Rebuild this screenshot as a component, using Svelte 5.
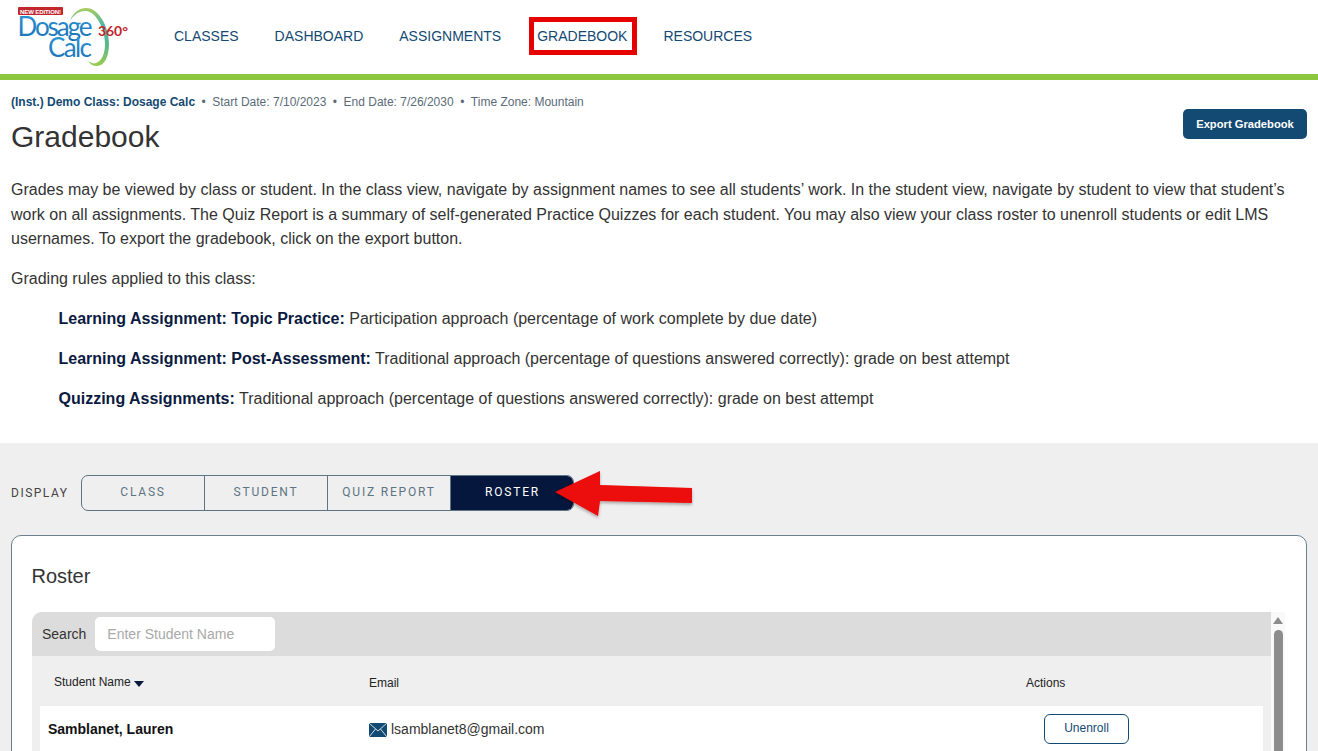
<script>
  const navItems = ["CLASSES", "DASHBOARD", "ASSIGNMENTS", "GRADEBOOK", "RESOURCES"];
  const tabs = ["CLASS", "STUDENT", "QUIZ REPORT", "ROSTER"];
  const activeTab = "ROSTER";
  const rules = [
    { label: "Learning Assignment: Topic Practice:", text: "Participation approach (percentage of work complete by due date)" },
    { label: "Learning Assignment: Post-Assessment:", text: "Traditional approach (percentage of questions answered correctly): grade on best attempt" },
    { label: "Quizzing Assignments:", text: "Traditional approach (percentage of questions answered correctly): grade on best attempt" },
  ];
</script>

<div class="page">
  <header class="topbar">
    <svg class="logo" width="120" height="68" viewBox="0 0 120 68">
      <defs>
        <linearGradient id="arc" x1="0" y1="0" x2="0" y2="1">
          <stop offset="0" stop-color="#a9cf5a" />
          <stop offset="0.3" stop-color="#4fb3a8" />
          <stop offset="0.65" stop-color="#59b98a" />
          <stop offset="1" stop-color="#9acb4c" />
        </linearGradient>
        <linearGradient id="word" x1="0" y1="0" x2="0" y2="1">
          <stop offset="0" stop-color="#2f9ad6" />
          <stop offset="1" stop-color="#1a6fb5" />
        </linearGradient>
      </defs>
      <path d="M58 21 C 61 12, 68 8, 74 8 C 87 8, 97 27, 97 44 C 97 57, 92 66, 85 66 C 81 66, 78 64, 76 61 C 79 63, 82 64, 84 63 C 90 61, 93 53, 93 44 C 93 28, 84 12, 74 11 C 68 10.500, 62 14, 58 21 Z" fill="url(#arc)" />
      <rect x="6" y="7" width="45" height="8" rx="1" fill="#c1272d" />
      <text x="8" y="13.500" class="badge" textLength="41">NEW EDITION!</text>
      <text x="5.500" y="36" class="word" fill="url(#word)" textLength="75">Dosage</text>
      <text x="36" y="57" class="word" fill="url(#word)" textLength="44">Calc</text>
      <text x="86" y="36" class="deg" textLength="30">360°</text>
    </svg>
    <nav class="nav">
      {#each navItems as item}
        <a class="nav-link" href="#top">
          {item}
          {#if item === "GRADEBOOK"}<span class="callout"></span>{/if}
        </a>
      {/each}
    </nav>
  </header>

  <section class="intro">
    <div class="title-row">
      <div>
        <div class="meta">
          <strong>(Inst.) Demo Class: Dosage Calc</strong>
          <span class="dot">•</span>
          <span>Start Date: 7/10/2023</span>
          <span class="dot">•</span>
          <span>End Date: 7/26/2030</span>
          <span class="dot">•</span>
          <span>Time Zone: Mountain</span>
        </div>
        <h1>Gradebook</h1>
      </div>
      <button class="export">Export Gradebook</button>
    </div>
    <p class="lead">
      Grades may be viewed by class or student. In the class view, navigate by assignment names to see all students’ work. In the student view, navigate by student to view that student’s work on all assignments. The Quiz Report is a summary of self-generated Practice Quizzes for each student. You may also view your class roster to unenroll students or edit LMS usernames. To export the gradebook, click on the export button.
    </p>
    <p class="lead rules-title">Grading rules applied to this class:</p>
    <ul class="rules">
      {#each rules as rule}
        <li><strong>{rule.label}</strong> {rule.text}</li>
      {/each}
    </ul>
  </section>

  <section class="lower">
    <div class="display">
      <span class="display-label">DISPLAY</span>
      <div class="tabs">
        {#each tabs as tab}
          <button class="tab" class:active={tab === activeTab}>{tab}</button>
        {/each}
      </div>
      <svg class="arrow" width="150" height="58" viewBox="0 0 150 58">
        <defs>
          <filter id="arrow-shadow" x="-10%" y="-10%" width="120%" height="130%">
            <feDropShadow dx="0" dy="2" stdDeviation="1.500" flood-color="#000" flood-opacity="0.3" />
          </filter>
        </defs>
        <path d="M5 24 L50 3 L50 17 L142 20 L142 35 L50 33 L48 48 Z" fill="#ec0808" filter="url(#arrow-shadow)" />
      </svg>
    </div>

    <div class="card">
      <h2>Roster</h2>
      <div class="scroller">
        <div class="table">
          <div class="search">
            <label for="student-search">Search</label>
            <input id="student-search" placeholder="Enter Student Name" />
          </div>
          <div class="row head">
            <div class="col-name">Student Name <span class="caret"></span></div>
            <div class="col-email">Email</div>
            <div class="col-actions">Actions</div>
          </div>
          <div class="row student">
            <div class="col-name"><strong>Samblanet, Lauren</strong></div>
            <div class="col-email">
              <svg class="mail" width="18" height="14" viewBox="0 0 18 14">
                <rect width="18" height="14" fill="#134a73" />
                <path d="M0 0 L9 8 L18 0 M0 14 L6.500 6 M18 14 L11.500 6" fill="none" stroke="#fff" stroke-width="0.800" />
              </svg>
              lsamblanet8@gmail.com
            </div>
            <div class="col-actions"><button class="unenroll">Unenroll</button></div>
          </div>
        </div>
        <div class="scrollbar">
          <span class="up"></span>
          <span class="thumb"></span>
        </div>
      </div>
    </div>
  </section>
</div>

<style>
  :global(body) {
    margin: 0;
    overflow: hidden;
  }

  .page {
    height: 751px;
    overflow: hidden;
    font-family: "Liberation Sans", Arial, sans-serif;
    color: #333;
    background: #fff;
    display: flex;
    flex-direction: column;
  }

  .topbar {
    height: 74px;
    flex: none;
    display: flex;
    align-items: center;
    border-bottom: 6px solid #8cc63f;
    padding-left: 12px;
  }

  .logo {
    flex: none;
    align-self: flex-start;
  }

  .badge {
    font: bold 6px "Liberation Sans", sans-serif;
    fill: #fff;
  }

  .word {
    font: 26px Lato, sans-serif;
  }

  .deg {
    font: bold 14px Lato, sans-serif;
    fill: #c1272d;
  }

  .nav {
    display: flex;
    gap: 36px;
    margin-left: 42px;
    margin-bottom: 3px;
  }

  .nav-link {
    position: relative;
    font-size: 14px;
    color: #134a73;
    text-decoration: none;
  }

  .callout {
    position: absolute;
    left: -8px;
    right: -10px;
    top: -11px;
    bottom: -11px;
    border: 5px solid #e60000;
  }

  .intro {
    padding: 14px 11px 0;
    height: 363px;
    box-sizing: border-box;
    flex: none;
  }

  .title-row {
    display: flex;
    justify-content: space-between;
    align-items: flex-start;
  }

  .meta {
    font-size: 12px;
    line-height: 16px;
    color: #5a6b78;
    display: flex;
    gap: 6px;
  }

  .meta strong {
    color: #134a73;
  }

  .dot {
    margin: 0 0.500px;
  }

  h1 {
    margin: 9px 0 0;
    font-size: 30px;
    font-weight: 400;
    line-height: 36px;
    color: #333;
  }

  .export {
    margin-top: 15px;
    width: 124px;
    height: 30px;
    border: none;
    border-radius: 5px;
    background: #134a73;
    color: #fff;
    font: bold 11.200px "Liberation Sans", sans-serif;
  }

  .lead {
    margin: 23px 0 0;
    font-size: 16px;
    line-height: 24.500px;
    color: #333;
  }

  .rules-title {
    margin-top: 15px;
  }

  .rules {
    list-style: none;
    margin: 15px 0 0;
    padding: 0 0 0 47.500px;
    font-size: 16px;
    line-height: 25px;
    display: flex;
    flex-direction: column;
    gap: 15px;
  }

  .rules strong {
    color: #0a1a3f;
  }

  .lower {
    flex: 1;
    background: #efefef;
    padding: 32px 11px 0;
    min-height: 0;
  }

  .display {
    position: relative;
    display: flex;
    align-items: center;
    height: 36px;
  }

  .display-label {
    width: 70px;
    padding-bottom: 1px;
    font: 12px Roboto, sans-serif;
    letter-spacing: 1.500px;
    color: #444;
  }

  .tabs {
    display: flex;
    width: 493px;
    height: 36px;
    box-sizing: border-box;
    border: 1px solid #5d7482;
    border-radius: 7px;
    overflow: hidden;
  }

  .tab {
    flex: none;
    width: 123px;
    padding: 0 0 2px;
    border: none;
    border-right: 1px solid #5d7482;
    background: transparent;
    color: #5d7482;
    font: 12px Roboto, sans-serif;
    letter-spacing: 1.800px;
  }

  .tab:last-child {
    border-right: none;
  }

  .tab.active {
    flex: 1;
    margin: -1px -1px -1px 0;
    background: #05173d;
    color: #fff;
  }

  .arrow {
    position: absolute;
    left: 539px;
    top: -7px;
  }

  .card {
    margin-top: 24px;
    background: #fff;
    border: 1px solid #6b7f8c;
    border-radius: 10px;
    height: 400px;
    box-sizing: border-box;
    padding: 0 20px;
  }

  h2 {
    margin: 28px 0 24px -0.500px;
    font-size: 20px;
    font-weight: 400;
    line-height: 24px;
    color: #333;
  }

  .scroller {
    display: flex;
    margin-right: 1px;
  }

  .table {
    width: 1239px;
    flex: none;
    background: #efefef;
    border-radius: 10px 0 0 0;
    overflow: hidden;
    padding-bottom: 100px;
  }

  .search {
    height: 44px;
    background: #dcdcdc;
    display: flex;
    align-items: center;
    gap: 9px;
    padding-left: 10px;
    font-size: 14px;
    color: #333;
  }

  .search input {
    width: 180px;
    height: 34px;
    box-sizing: border-box;
    border: none;
    border-radius: 5px;
    padding: 0 12px;
    font: 14px "Liberation Sans", sans-serif;
    background: #fff;
  }

  .search input::placeholder {
    color: #a9a9a9;
  }

  .row {
    display: flex;
    align-items: center;
  }

  .head {
    height: 50px;
    box-sizing: border-box;
    padding-top: 4px;
    font-size: 12px;
    color: #222;
  }

  .head .col-name {
    padding-left: 22px;
    margin-top: -2px;
  }

  .head .col-name,
  .student .col-name {
    width: 337px;
    box-sizing: border-box;
  }

  .head .col-email {
    width: 657px;
  }

  .caret {
    display: inline-block;
    vertical-align: -1px;
    border-left: 5.500px solid transparent;
    border-right: 5.500px solid transparent;
    border-top: 6px solid #0a1a3f;
  }

  .student {
    margin: 0 8px;
    background: #fff;
    height: 46px;
    font-size: 14px;
  }

  .student .col-name {
    width: 329px;
    padding-left: 8px;
    color: #111;
  }

  .student .col-email {
    width: 675px;
    display: flex;
    align-items: center;
    gap: 4px;
    color: #333;
  }

  .mail {
    flex: none;
    margin-top: 1px;
  }

  .unenroll {
    width: 85px;
    height: 30px;
    margin-top: -1px;
    background: #fff;
    border: 1px solid #134a73;
    border-radius: 6px;
    color: #134a73;
    font: 12px "Liberation Sans", sans-serif;
    padding: 0 0 2px;
  }

  .scrollbar {
    width: 15px;
    background: #f9f9f9;
    display: flex;
    flex-direction: column;
    align-items: center;
    padding-top: 5px;
    box-sizing: border-box;
  }

  .up {
    border-left: 5px solid transparent;
    border-right: 5px solid transparent;
    border-bottom: 7px solid #8c8c8c;
  }

  .thumb {
    margin-top: 6px;
    width: 9px;
    flex: 1;
    border-radius: 5px 5px 0 0;
    background: #8c8c8c;
  }
</style>
